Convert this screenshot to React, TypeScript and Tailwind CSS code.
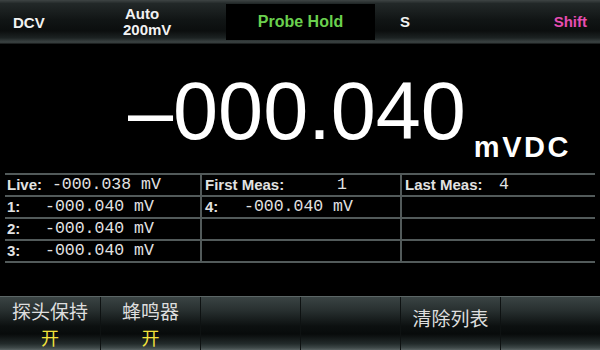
import React from "react";

// Multimeter front-panel screen: status bar, main reading, history table, softkeys.

const SANS = "font-['Liberation_Sans',Arial,sans-serif]";
const MONO = "font-['Liberation_Mono','Courier_New',monospace]";
const CJK = "font-['Noto_Sans_CJK_SC','Noto_Sans',sans-serif]";

function StatusBar() {
  return (
    <div
      className={`h-[44px] shrink-0 flex items-center font-bold text-[#f2f2f2] ${SANS} bg-[linear-gradient(to_bottom,#3e4444_0%,#222828_8%,#111515_45%,#0b0e0e_70%,#1c2222_86%,#3c4444_96%,#101212_100%)]`}
    >
      <div className="w-[123px] pl-[13px] text-[15px] leading-none">DCV</div>
      <div className="w-[103px] flex flex-col text-[15px] leading-[16px]">
        <span className="pl-[2px]">Auto</span>
        <span>200mV</span>
      </div>
      <div className="w-[149px] h-[36px] bg-black flex items-center justify-center text-[16px] text-[#6ad04e]">
        Probe Hold
      </div>
      <div className="pl-[25px] text-[15px]">S</div>
      <div className="ml-auto pr-[13px] text-[15px] text-[#e64db2]">Shift</div>
    </div>
  );
}

function Reading() {
  return (
    <div className={`h-[129px] shrink-0 flex items-start pl-[128px] pt-[26px] text-white ${SANS}`}>
      <span className="text-[81px] leading-[82px]">–000.040</span>
      <span className="ml-[8px] mt-[63px] text-[29px] leading-[29px] font-bold tracking-[2.5px]">mVDC</span>
    </div>
  );
}

const LABEL = `${SANS} font-bold text-[15px]`;
const NUM = `${MONO} text-[16.5px]`;

function HistoryTable() {
  const rows: [string, string, string][] = [
    ["live", "first", "last"],
    ["1", "4", ""],
    ["2", "", ""],
    ["3", "", ""],
  ];
  return (
    <div className="mx-[5px] border-t-2 border-[#525a5a] text-[#e2e2e2]">
      {rows.map((r, i) => (
        <div key={i} className="h-[22px] border-b-2 border-[#525a5a] flex whitespace-pre">
          <div className="w-[195px] flex items-center pl-[2px]">
            {r[0] === "live" ? (
              <>
                <span className={LABEL}>Live:</span>
                <span className={NUM}> -000.038 mV</span>
              </>
            ) : (
              <>
                <span className={`${LABEL} w-[38px]`}>{r[0]}:</span>
                <span className={NUM}>-000.040 mV</span>
              </>
            )}
          </div>
          <div className="w-[200px] border-l-2 border-[#525a5a] flex items-center pl-[3px]">
            {r[1] === "first" && (
              <>
                <span className={`${LABEL} w-[132px]`}>First Meas:</span>
                <span className={NUM}>1</span>
              </>
            )}
            {r[1] === "4" && (
              <>
                <span className={`${LABEL} w-[39px]`}>4:</span>
                <span className={NUM}>-000.040 mV</span>
              </>
            )}
          </div>
          <div className="w-[195px] border-l-2 border-[#525a5a] flex items-center pl-[3px]">
            {r[2] === "last" && (
              <>
                <span className={`${LABEL} w-[94px]`}>Last Meas:</span>
                <span className={NUM}>4</span>
              </>
            )}
          </div>
        </div>
      ))}
    </div>
  );
}

function SoftKeys() {
  const keys: { label: string; value?: string }[] = [
    { label: "探头保持", value: "开" },
    { label: "蜂鸣器", value: "开" },
    { label: "" },
    { label: "" },
    { label: "清除列表" },
    { label: "" },
  ];
  return (
    <div
      className={`mt-auto h-[54px] shrink-0 flex border-t border-[#5c6666] bg-[linear-gradient(to_bottom,#3a4444_0%,#283030_25%,#0c1010_55%,#080b0b_70%,#222a2a_88%,#3e4848_96%,#5a6464_100%)] ${CJK}`}
    >
      {keys.map((k, i) => (
        <div
          key={i}
          className={`w-[100px] h-full flex flex-col items-center justify-center ${
            i > 0 ? "border-l border-[#0e1212]" : ""
          } ${k.value ? "" : "pb-[12px]"}`}
        >
          {k.label && <span className="text-[19px] leading-[26px] text-[#dedede]">{k.label}</span>}
          {k.value && <span className="text-[18px] leading-[26px] text-[#f2e23c]">{k.value}</span>}
        </div>
      ))}
    </div>
  );
}

export default function App() {
  return (
    <div className="w-[600px] h-[350px] bg-black flex flex-col overflow-hidden">
      <StatusBar />
      <Reading />
      <HistoryTable />
      <SoftKeys />
    </div>
  );
}
